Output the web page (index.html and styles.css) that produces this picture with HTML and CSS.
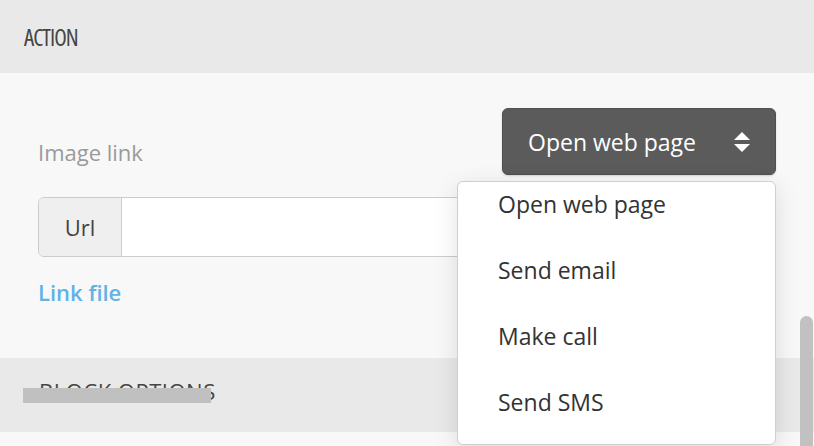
FILE: index.html
```html
<!DOCTYPE html>
<html lang="en">
<head>
  <meta charset="UTF-8" />
  <title>Block settings</title>
  <link rel="stylesheet" href="styles.css">
</head>
<body>
  <div class="panel">
    <div class="panel-head">ACTION</div>

    <div class="panel-body">
      <div class="row">
        <label class="field-label">Image link</label>
        <div class="select-wrap">
          <button class="select">
            <span>Open web page</span>
            <svg class="arrows" width="16" height="20" viewBox="0 0 16 20">
              <path d="M8 0 L16 8 L0 8 Z" fill="#fff" />
              <path d="M0 12 L16 12 L8 20 Z" fill="#fff" />
            </svg>
          </button>

          <!-- open options list -->
          <div class="dropdown">
            <ul>
              <li>Open web page</li>
              <li>Send email</li>
              <li>Make call</li>
              <li>Send SMS</li>
            </ul>
          </div>
        </div>
      </div>

      <div class="input-group">
        <span class="addon">Url</span>
        <input type="text" class="url-input" />
      </div>

      <a class="link-file" href="#">Link file</a>
    </div>

    <div class="panel-head panel-head-block">
      BLOCK OPTIONS
      <span class="redact"></span>
    </div>
    <div class="panel-rest"></div>
  </div>

  <div class="scroll-thumb"></div>
</body>
</html>
```

FILE: styles.css
```css
body {
  margin: 0;
  font-family: "Open Sans", "Noto Sans", Arial, sans-serif;
  background: #f8f8f8;
  overflow: hidden;
  height: 446px;
}

.panel-head {
  height: 73px;
  background: #e9e9e9;
  padding-left: 24px;
  display: flex;
  align-items: center;
  font-size: 23px;
  font-weight: 500;
  font-stretch: 75%;
  letter-spacing: -1px;
  color: #454545;
}

.panel-head-block {
  position: relative;
  height: 74px;
  box-sizing: border-box;
  padding: 0 0 8px 39px;
  font-size: 22px;
  font-stretch: 100%;
  letter-spacing: 0.5px;
}

.redact {
  position: absolute;
  left: 23px;
  top: 30px;
  width: 188px;
  height: 15px;
  background: #c0c0c0;
}

.panel-body {
  padding: 35px 38px 0 38px;
  height: 250px;
}

.row {
  display: flex;
  justify-content: space-between;
  align-items: center;
}

.field-label {
  font-size: 22px;
  font-weight: 500;
  color: #999a9b;
  margin-top: 20px;
}

.select-wrap {
  position: relative;
}

.select {
  width: 274px;
  height: 67px;
  background: #5b5b5b;
  border: 1px solid #505050;
  border-radius: 6px;
  color: #fff;
  font-family: inherit;
  font-size: 23px;
  font-weight: 500;
  display: flex;
  align-items: center;
  justify-content: space-between;
  padding: 0 25px 0 25px;
  box-shadow: 0 1px 2px rgba(0, 0, 0, 0.15);
}

.dropdown {
  position: absolute;
  left: -45px;
  top: 73px;
  width: 319px;
  height: 264px;
  background: #fff;
  border: 1px solid #cfcfcf;
  border-radius: 6px;
  box-sizing: border-box;
  overflow: hidden;
  box-shadow: 0 6px 24px rgba(0, 0, 0, 0.12);
  z-index: 2;
}

.dropdown ul {
  list-style: none;
  margin: -11px 0 0 0;
  padding: 0;
}

.dropdown li {
  height: 66px;
  line-height: 66px;
  padding-left: 40px;
  font-size: 23px;
  font-weight: 500;
  color: #333;
}

.input-group {
  display: flex;
  margin-top: 22px;
  height: 60px;
  border: 1px solid #cccccc;
  border-radius: 6px;
  box-sizing: border-box;
  overflow: hidden;
}

.addon {
  width: 82px;
  background: #efefef;
  border-right: 1px solid #cccccc;
  display: flex;
  align-items: center;
  justify-content: center;
  font-size: 22px;
  font-weight: 500;
  color: #444;
}

.url-input {
  flex: 1;
  border: none;
  background: #fff;
  outline: none;
}

.link-file {
  display: inline-block;
  margin-top: 20px;
  font-size: 22px;
  font-weight: 600;
  color: #62b2e6;
  text-decoration: none;
}

.panel-rest {
  height: 20px;
}

.scroll-thumb {
  position: absolute;
  left: 800px;
  top: 316px;
  width: 13px;
  height: 140px;
  background: #c1c1c1;
  border-radius: 7px;
}
```
